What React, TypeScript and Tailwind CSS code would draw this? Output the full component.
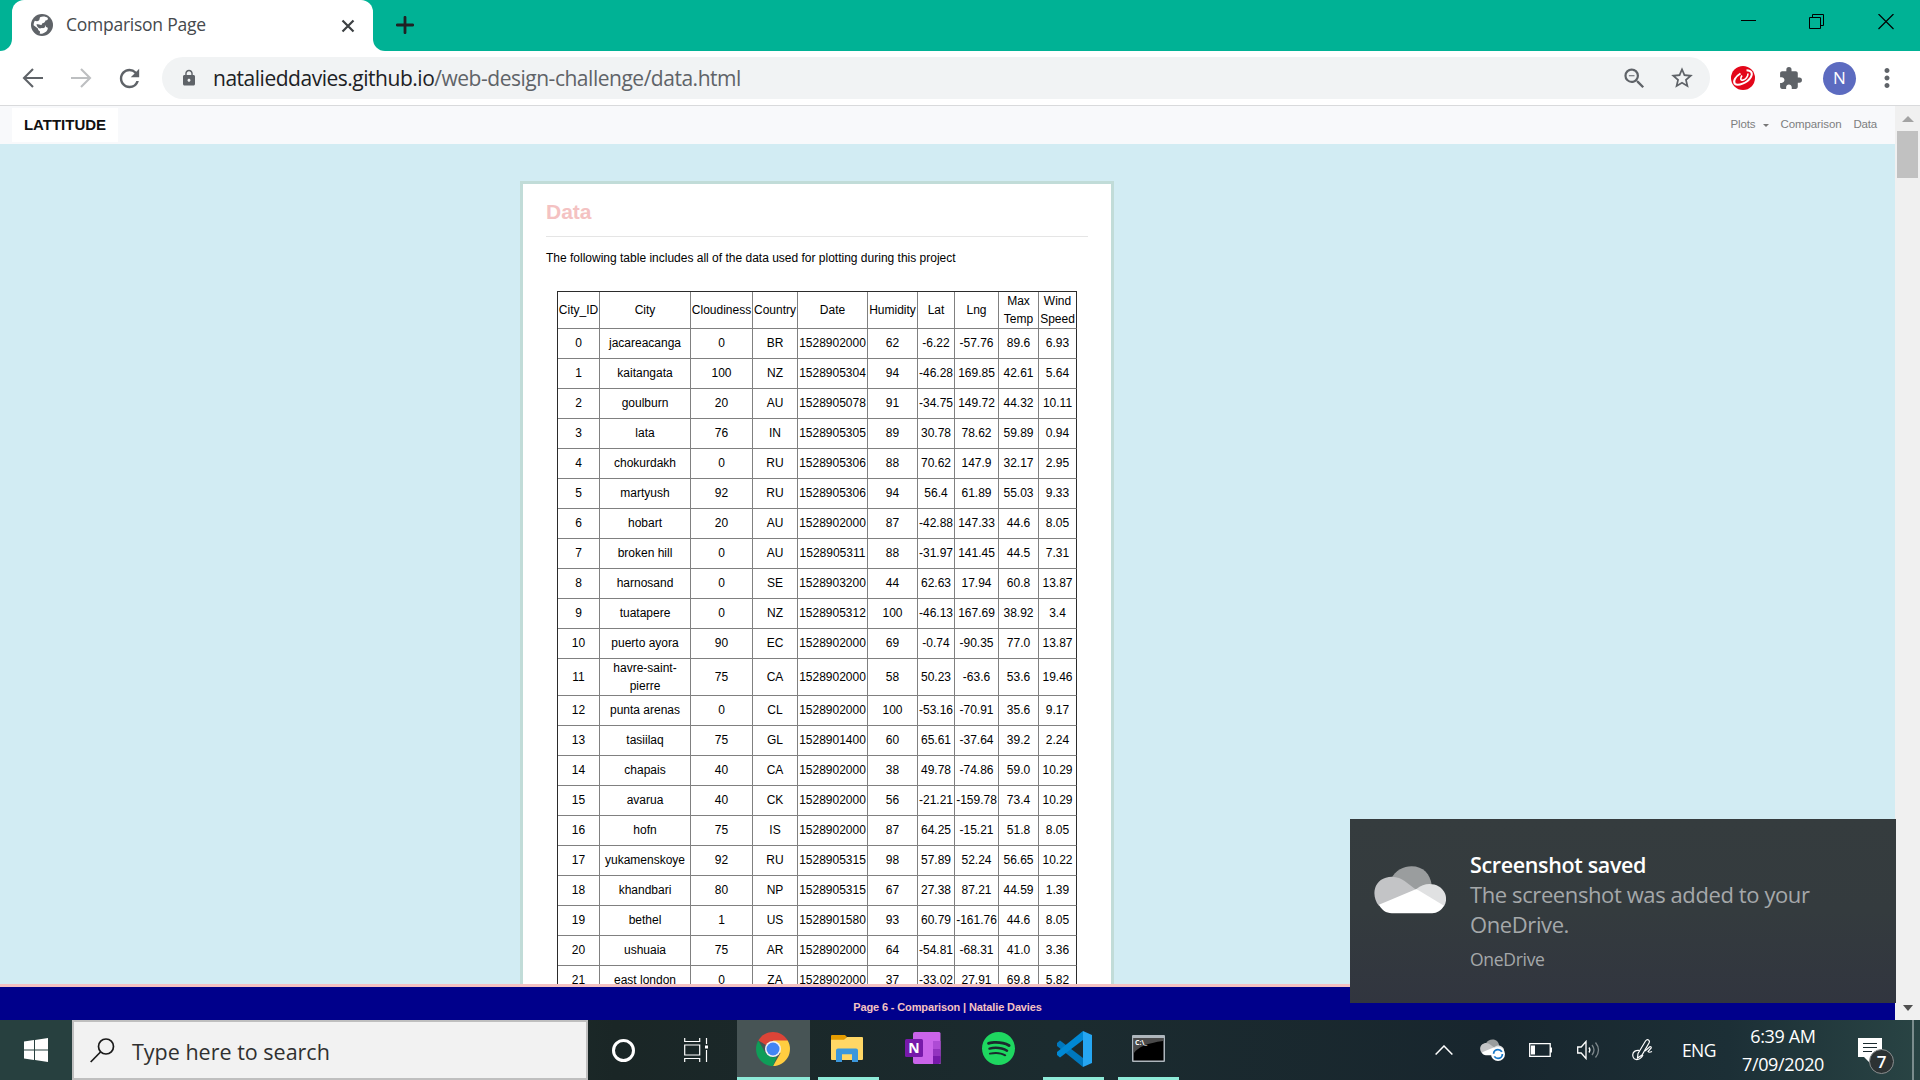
import React from 'react';
import { MdLock, MdExtension, MdStarOutline, MdZoomOut, MdRefresh, MdMoreVert } from 'react-icons/md';
import { SiSpotify } from 'react-icons/si';

const columns = ['City_ID', 'City', 'Cloudiness', 'Country', 'Date', 'Humidity', 'Lat', 'Lng', 'Max Temp', 'Wind Speed'];
const widths = [42, 91, 62, 45, 70, 50, 37, 44, 40, 38];

const rows: string[][] = [
  ['0', 'jacareacanga', '0', 'BR', '1528902000', '62', '-6.22', '-57.76', '89.6', '6.93'],
  ['1', 'kaitangata', '100', 'NZ', '1528905304', '94', '-46.28', '169.85', '42.61', '5.64'],
  ['2', 'goulburn', '20', 'AU', '1528905078', '91', '-34.75', '149.72', '44.32', '10.11'],
  ['3', 'lata', '76', 'IN', '1528905305', '89', '30.78', '78.62', '59.89', '0.94'],
  ['4', 'chokurdakh', '0', 'RU', '1528905306', '88', '70.62', '147.9', '32.17', '2.95'],
  ['5', 'martyush', '92', 'RU', '1528905306', '94', '56.4', '61.89', '55.03', '9.33'],
  ['6', 'hobart', '20', 'AU', '1528902000', '87', '-42.88', '147.33', '44.6', '8.05'],
  ['7', 'broken hill', '0', 'AU', '1528905311', '88', '-31.97', '141.45', '44.5', '7.31'],
  ['8', 'harnosand', '0', 'SE', '1528903200', '44', '62.63', '17.94', '60.8', '13.87'],
  ['9', 'tuatapere', '0', 'NZ', '1528905312', '100', '-46.13', '167.69', '38.92', '3.4'],
  ['10', 'puerto ayora', '90', 'EC', '1528902000', '69', '-0.74', '-90.35', '77.0', '13.87'],
  ['11', 'havre-saint-pierre', '75', 'CA', '1528902000', '58', '50.23', '-63.6', '53.6', '19.46'],
  ['12', 'punta arenas', '0', 'CL', '1528902000', '100', '-53.16', '-70.91', '35.6', '9.17'],
  ['13', 'tasiilaq', '75', 'GL', '1528901400', '60', '65.61', '-37.64', '39.2', '2.24'],
  ['14', 'chapais', '40', 'CA', '1528902000', '38', '49.78', '-74.86', '59.0', '10.29'],
  ['15', 'avarua', '40', 'CK', '1528902000', '56', '-21.21', '-159.78', '73.4', '10.29'],
  ['16', 'hofn', '75', 'IS', '1528902000', '87', '64.25', '-15.21', '51.8', '8.05'],
  ['17', 'yukamenskoye', '92', 'RU', '1528905315', '98', '57.89', '52.24', '56.65', '10.22'],
  ['18', 'khandbari', '80', 'NP', '1528905315', '67', '27.38', '87.21', '44.59', '1.39'],
  ['19', 'bethel', '1', 'US', '1528901580', '93', '60.79', '-161.76', '44.6', '8.05'],
  ['20', 'ushuaia', '75', 'AR', '1528902000', '64', '-54.81', '-68.31', '41.0', '3.36'],
  ['21', 'east london', '0', 'ZA', '1528902000', '37', '-33.02', '27.91', '69.8', '5.82'],
];

function TabStrip() {
  return (
    <div className="flex h-[51px] shrink-0 bg-[#00b295]">
      <div className="w-3 bg-white">
        <div className="h-full rounded-br-[12px] bg-[#00b295]" />
      </div>
      <div className="bg-[#00b295]">
        <div className="flex h-full w-[361px] items-center rounded-t-[12px] bg-white pl-[19px] pr-[17px]">
          <svg className="mt-[-1px] size-[22px]" viewBox="0 0 22 22">
            <circle cx="11" cy="11" r="11" fill="#5f6368" />
            <path d="M9 3.200C12 2 15 2.600 16.800 4c.4 1.500-.3 2.500-2.300 2.600-.6 1.800-1.400 2.600-3.200 2.700-.2 1.400-.8 1.700-1.900 1.700l4 .2c1.300 0 1.600.8 1.600 1.700 1.300 0 1.900.8 1.800 1.700-.1 2.200-2.200 4-5 4.900-1.200.3-2.400.2-3.200 0 .6-1 .5-1.600.2-2.300-1.300-.7-1.900-1.400-1.900-2.700l-4.300-3.300c0-1.700.5-3.200 1.200-4.400 1.700.5 3 .6 4-.2 1-.8.5-1.700 1.200-3.400z" fill="#fff" />
            <path d="M5.500 10.200c2 .1 3.400.2 4.500.8h3.200c.8 0 1.300.6 1 1.600-.5 1.400-1.700 1.700-3 1.500-1-.2-1.400.4-2.200.4-1.900-.6-3.300-2.200-3.500-4.300z" fill="#5f6368" />
          </svg>
          <span className="ml-[13px] mt-[-2px] flex-1 text-[17.500px] tracking-[-0.25px] text-[#45494d]">Comparison Page</span>
          <svg className="size-4 text-[#3c4043]" viewBox="0 0 16 16" stroke="currentColor" strokeWidth="2.2"><path d="M2.500 2.500l11 11M13.500 2.500l-11 11" /></svg>
        </div>
      </div>
      <div className="flex-1 bg-white">
        <div className="flex h-full items-center rounded-bl-[12px] bg-[#00b295] pl-[23px]">
          <svg className="mt-[-1px] size-[18px] text-[#202124]" viewBox="0 0 18 18" stroke="currentColor" strokeWidth="2.800" strokeLinecap="round"><path d="M9 1.300v15.400M1.300 9h15.400" /></svg>
          <div className="ml-auto flex items-center pb-[8px] pr-[26px] text-black">
            <svg className="size-4" viewBox="0 0 16 16" stroke="currentColor"><path d="M0 6.500h15" /></svg>
            <svg className="ml-[52px] size-4" viewBox="0 0 16 16" fill="none" stroke="currentColor"><path d="M.5 3.500h11v11H.5zM3.500 3.500V.5h11v11h-3" /></svg>
            <svg className="ml-[53px] size-4" viewBox="0 0 16 16" stroke="currentColor" strokeWidth="1.200"><path d="M.5 0l15 15M15.500 0l-15 15" /></svg>
          </div>
        </div>
      </div>
    </div>
  );
}

function Toolbar() {
  return (
    <div className="flex h-[55px] shrink-0 items-center border-b border-[#d9dadc] bg-white pl-[22px] pr-[18px] text-[#5f6368]">
      <svg className="size-[22px]" viewBox="0 0 22 22" fill="none" stroke="currentColor" strokeWidth="2.100"><path d="M21 11H2.500M11 2l-9 9 9 9" /></svg>
      <svg className="ml-[26px] size-[22px] text-[#bdbfc1]" viewBox="0 0 22 22" fill="none" stroke="currentColor" strokeWidth="2.100"><path d="M1 11h18.500M11 2l9 9-9 9" /></svg>
      <MdRefresh className="ml-[23px] size-[29px]" />
      <div className="ml-[18px] flex h-[42px] flex-1 items-center rounded-full bg-[#f1f3f4] pl-[18px] pr-[15px]">
        <MdLock className="size-[18px]" />
        <span className="ml-[15px] text-[21px] leading-none tracking-[-0.480px]">
          <span className="text-[#202124]">natalieddavies.github.io</span>/web-design-challenge/data.html
        </span>
        <MdZoomOut className="ml-auto size-[27px]" />
        <MdStarOutline className="ml-[21px] size-[26px]" />
      </div>
      <svg className="ml-[21px] size-6" viewBox="0 0 24 24">
        <circle cx="12" cy="12" r="12" fill="#e3071a" />
        <path d="M9.500 7.500C4.500 10.500 1.800 15 3.800 17.800c3 2.700 12.500-.8 16-6.600C22 7.500 20.500 4.300 15.500 4.200" fill="none" stroke="#fff" strokeWidth="2" />
        <path d="M11 9.500c-2 3-1.500 5.200.8 4.600 2.900-.6 5.200-3.600 5.200-6.600" fill="none" stroke="#fff" strokeWidth="1.600" />
      </svg>
      <MdExtension className="ml-[23px] size-[25px]" />
      <div className="ml-[20px] flex size-[33px] items-center justify-center rounded-full bg-[#5c6bc0] text-[17px] text-white">N</div>
      <MdMoreVert className="ml-[16px] size-[30px]" />
    </div>
  );
}

function DataTable() {
  return (
    <table className="ml-[11px] w-[520px] table-fixed border-separate border-spacing-0 border border-r-0 border-b-0 border-[#2b2b2b] text-center text-[12px] leading-[18px] text-black">
      <colgroup>
        {widths.map((w, i) => <col key={i} style={{ width: w }} />)}
      </colgroup>
      <tbody>
        <tr className="h-[37px]">
          {columns.map((c) => (
            <td key={c} className="border-r border-b border-[#808080] p-0 last:border-r-[#2b2b2b]">{c}</td>
          ))}
        </tr>
        {rows.map((r) => (
          <tr key={r[0]} className={r[0] === '11' ? 'h-[37px]' : 'h-[30px]'}>
            {r.map((v, i) => (
              <td key={i} className={r[0] === '11' ? 'border-r border-b border-[#808080] p-0 last:border-r-[#2b2b2b]' : 'border-r border-b border-[#808080] p-0 pb-px last:border-r-[#2b2b2b]'}>{v}</td>
            ))}
          </tr>
        ))}
      </tbody>
    </table>
  );
}

function Page() {
  return (
    <div className="flex min-h-0 flex-1 font-['Liberation_Sans',Arial,sans-serif]">
      <div className="flex min-w-0 flex-1 flex-col bg-[#d2ecf3]">
        <nav className="flex h-[38px] shrink-0 items-center bg-[#f8f9fb] pl-3 pr-[18px] text-[11.500px] text-[#7d7e7f]">
          <span className="flex h-[34px] w-[106px] items-center justify-center bg-white text-[15px] font-bold text-[#111]">LATTITUDE</span>
          <span className="ml-auto tracking-[-0.100px]">Plots</span>
          <span className="ml-[7px] mr-[12px] border-x-[3px] border-t-[3px] border-x-transparent border-t-[#777]" />
          <span className="tracking-[-0.100px]">Comparison</span>
          <span className="ml-3 tracking-[-0.200px]">Data</span>
        </nav>
        <div className="flex min-h-0 flex-1 flex-col overflow-hidden">
          <main className="ml-[520px] mt-[37px] h-[1100px] w-[594px] shrink-0 border-[3px] border-[#c1dcd8] bg-white px-[23px]">
            <h1 className="mt-[15px] text-[21px] font-bold leading-[25px] text-[#f4c2c2]">Data</h1>
            <hr className="mt-[12px] border-[#e5e5e5]" />
            <p className="mb-[24px] mt-[12px] text-[12px] leading-[18px] text-black">The following table includes all of the data used for plotting during this project</p>
            <DataTable />
          </main>
        </div>
        <footer className="flex h-[36px] shrink-0 items-center justify-center border-t-[3px] border-[#f4c2c2] bg-[#00008b] pt-[8px] text-[11px] font-bold tracking-[-0.130px] text-[#f4c2c2]">
          Page 6 - Comparison | Natalie Davies
        </footer>
      </div>
      <div className="flex w-[25px] flex-col items-center bg-[#f0f0f0]">
        <div className="mt-[10px] border-x-[6px] border-b-[6px] border-x-transparent border-b-[#a3a3a3]" />
        <div className="mt-[9px] h-[47px] w-[21px] bg-[#c1c1c1]" />
        <div className="mb-[9px] mt-auto border-x-[5px] border-t-[6px] border-x-transparent border-t-[#505050]" />
      </div>
    </div>
  );
}

function Cloud({ className }: { className: string }) {
  return (
    <svg className={className} viewBox="0 0 73 48">
      <path d="M17 13C22 4 30 0 38 0c12 0 19 8 20.500 19L43 28z" fill="#9a9d9e" />
      <path d="M5 40C-3 30-.5 15 12 11.500 20 9 27 12 31 15l12 9-20 12z" fill="#c3c4c6" />
      <path d="M43 23c6-5 12-6 18-4.500 11 3 15 14 10 22L60 40z" fill="#e0e1e2" />
      <path d="M5 39l38-16 28 17c-3 5-7 7.500-12 7.500H18c-6 0-10-3-13-8.500z" fill="#fff" />
    </svg>
  );
}

function Toast() {
  return (
    <div className="absolute left-[1350px] top-[819px] flex h-[184px] w-[546px] bg-linear-to-b from-[#353c3e] via-[#343b3e] to-[#31353f] pl-6">
      <Cloud className="mt-[47px] h-[48px] w-[72px]" />
      <div className="ml-[24px] mt-[31px] text-[22px] leading-[30px] text-[#a5a8aa]">
        <div className="text-[21.500px] font-semibold tracking-[-0.350px] text-white">Screenshot saved</div>
        <div className="mt-[-1px] tracking-[-0.400px]">The screenshot was added to your</div>
        <div className="tracking-[-0.400px]">OneDrive.</div>
        <div className="mt-[7px] text-[17.500px] leading-[26px] tracking-[-0.300px]">OneDrive</div>
      </div>
    </div>
  );
}

function TaskButton({ children, active, running }: { children: React.ReactNode; active?: boolean; running?: boolean }) {
  return (
    <div className={active ? 'flex h-full w-[73px] flex-col items-center bg-[#475455]' : 'flex h-full w-[61px] flex-col items-center'}>
      <div className="flex flex-1 items-center">{children}</div>
      <div className={running ? 'h-[3px] w-full bg-[#8eead8]' : 'h-[3px] w-full'} />
    </div>
  );
}

function Taskbar() {
  return (
    <div className="flex h-[60px] shrink-0 items-center bg-[linear-gradient(90deg,#27403f_0%,#27403f_4%,#1a2626_32%,#1b2b2f_55%,#18262e_78%,#1c2f36_90%,#294444_100%)] text-white">
      <div className="flex w-[72px] justify-center">
        <svg className="size-6" viewBox="0 0 24 24" fill="#fff"><path d="M0 3.400l10-1.400v9.500H0zM11 1.900L24 0v11.500H11zM0 12.500h10V22L0 20.600zM11 12.500h13V24l-13-1.900z" /></svg>
      </div>
      <div className="flex h-full w-[516px] items-center border-2 border-[#bfbfbf] bg-[#f2f2f2] pl-[16px] text-[#1a1a1a]">
        <svg className="size-[25px]" viewBox="0 0 25 25" fill="none" stroke="currentColor" strokeWidth="1.700"><circle cx="16" cy="8.500" r="7.500" /><path d="M10.500 14L.7 24" /></svg>
        <span className="ml-[17px] mt-[5px] text-[21.500px] text-[#303030]">Type here to search</span>
      </div>
      <div className="flex w-[71px] justify-center"><div className="size-[23px] rounded-full border-[3px] border-white" /></div>
      <div className="flex w-[78px] justify-center pr-[4px]">
        <svg className="size-6" viewBox="0 0 24 24" fill="none" stroke="#fff" strokeWidth="1.200"><path d="M.7 0v3.500h15V0M.7 24v-3.500h15V24M.7 7h15v10h-15zM22.500 0v6M22.500 12v12" /><path d="M21 9h3" strokeWidth="3" /></svg>
      </div>
      <TaskButton active running>
        <svg className="mr-px size-[34px]" viewBox="0 0 34 34">
          <path d="M17 17L2.300 8.500A17 17 0 0 1 31.700 8.500z" fill="#db4437" />
          <path d="M17 8.500h14.700A17 17 0 0 1 17 34l7.400-12.800z" fill="#ffcd40" />
          <path d="M2.300 8.500l7.400 12.700 7.300 4.300 4-1L17 34A17 17 0 0 1 2.300 8.500z" fill="#0f9d58" />
          <circle cx="17" cy="17" r="8" fill="#f1f1f1" /><circle cx="17" cy="17" r="6.500" fill="#4285f4" />
        </svg>
      </TaskButton>
      <div className="w-[8px]" />
      <TaskButton running>
        <svg className="mr-[3px] h-[27px] w-[32px]" viewBox="0 0 32 28" preserveAspectRatio="none">
          <path d="M0 1Q0 0 1 0h13l2 2-3 4H0z" fill="#e59c00" /><path d="M0 5h13l3-3h15q1 0 1 1v22q0 1-1 1H1q-1 0-1-1z" fill="#ffd766" />
          <path d="M5 28V16q0-2 2-2h18q2 0 2 2v12h-6v-8H11v8z" fill="#3b97dc" />
        </svg>
      </TaskButton>
      <div className="w-[14px]" />
      <TaskButton>
        <svg className="mr-[2px] h-[33px] w-[36px]" viewBox="0 0 36 33">
          <path d="M10 0h24q1.500 0 1.500 1.500V32H10q-2 0-2-2V2q0-2 2-2z" fill="#ca64ea" /><path d="M28 9h7.500v9H28z" fill="#ae4bd5" /><path d="M28 17h7.500v8H28z" fill="#9332bf" /><path d="M28 24h7.500v6q0 2-2 2H28z" fill="#7719aa" />
          <rect x="0" y="7" width="18" height="18" rx="1.500" fill="#7719aa" /><text x="9" y="21" textAnchor="middle" fontSize="14" fontWeight="700" fill="#fff">N</text>
        </svg>
      </TaskButton>
      <div className="w-[14px]" />
      <TaskButton><SiSpotify className="mr-px size-[33px] text-[#1ed760]" /></TaskButton>
      <div className="w-[14px]" />
      <TaskButton running>
        <svg className="size-[36px]" viewBox="0 0 36 36">
          <path d="M1 12l3-2.500 23 17.500V36L1 15z" fill="#0077bd" />
          <path d="M1 24l3 2.500L27 9V0L1 21z" fill="#0088d4" />
          <path d="M27 0l9 4v28l-9 4z" fill="#26a6f2" />
        </svg>
      </TaskButton>
      <div className="w-[14px]" />
      <TaskButton running>
        <svg className="mr-px h-[27px] w-[33px]" viewBox="0 0 33 27">
          <rect width="33" height="27" rx="1" fill="#aeb6bd" /><path d="M1.500 3h30v22.500h-30z" fill="#000" /><path d="M2 3h29v3Q8 9 2 18z" fill="#4a4a4a" />
          <text x="3" y="10" fontSize="7" fontWeight="700" fill="#fff">C:\_</text>
        </svg>
      </TaskButton>
      <div className="ml-auto flex h-full items-center">
        <svg className="h-[10px] w-[18px]" viewBox="0 0 18 10" fill="none" stroke="#fff" strokeWidth="1.500"><path d="M.6 9.500L9 1l8.400 8.500" /></svg>
        <div className="relative ml-[27px] h-[22px] w-[25px]">
          <Cloud className="h-[17px] w-[24px]" />
          <svg className="absolute left-[11px] top-[8px] size-[14px]" viewBox="0 0 14 14" fill="none"><circle cx="7" cy="7" r="7" fill="#fff" /><circle cx="7" cy="7" r="4.400" stroke="#1677c8" strokeWidth="1.800" strokeDasharray="11 2.800" /></svg>
        </div>
        <svg className="ml-[24px] h-[14px] w-[23px]" viewBox="0 0 23 14" fill="none" stroke="#fff" strokeWidth="1.300"><path d="M.7.7h20.500v12.600H.7zM22.300 4.500v5" /><path d="M2 2.500h4v9H2z" fill="#fff" stroke="none" /></svg>
        <svg className="ml-[25px] h-[20px] w-[23px]" viewBox="0 0 23 20" fill="none" stroke="#fff" strokeWidth="1.300"><path d="M.7 7h3.500L9 1.500v17L4.200 13H.7z" /><path d="M12 7.500q1.800 2.500 0 5" /><path d="M15 5q4 5 0 10M18.500 2.500q6 7.500 0 15" stroke="#7d878b" /></svg>
        <svg className="ml-[32px] h-[22px] w-[21px]" viewBox="0 0 21 22" fill="none" stroke="#fff" strokeWidth="1.200"><path d="M6 14.500L13.500 2q1.500-2 3-1t.5 3L10 16l-4.500 3z" /><path d="M7.500 11.500Q1 11 .7 16q.3 5 5 4.500 3-.5 5.300-4.500M13 12l5-4.500q1.500 0 1.200 1.500L16 12.500q1 1.500 4 0" /></svg>
        <span className="ml-[29px] text-[17.500px] tracking-[-0.500px]">ENG</span>
        <div className="ml-[24px] w-[86px] text-center text-[18px] leading-[28px] tracking-[-0.350px]">
          <div>6:39 AM</div>
          <div>7/09/2020</div>
        </div>
        <div className="relative ml-[32px] mt-[14px] h-[38px] w-[37px]">
          <svg className="h-[26px] w-[24px]" viewBox="0 0 24 26"><path d="M0 0h24v19H12v6l-6-6H0z" fill="#fff" /><path d="M5 5.500h14M5 9.500h14M5 13.500h9" stroke="#1b2b30" strokeWidth="1.200" /></svg>
          <div className="absolute left-[11px] top-[11px] flex size-[25px] items-center justify-center rounded-full border border-[#8b8f90] bg-[#2c3233] text-[17px] font-semibold">7</div>
        </div>
        <div className="ml-[17px] h-full w-[8px] border-l-2 border-[#7b8c8d]" />
      </div>
    </div>
  );
}

export default function App() {
  return (
    <div className="relative flex h-[1080px] w-[1920px] flex-col overflow-hidden font-['Open_Sans','Noto_Sans',sans-serif]">
      <TabStrip />
      <Toolbar />
      <Page />
      <Taskbar />
      <Toast />
    </div>
  );
}
